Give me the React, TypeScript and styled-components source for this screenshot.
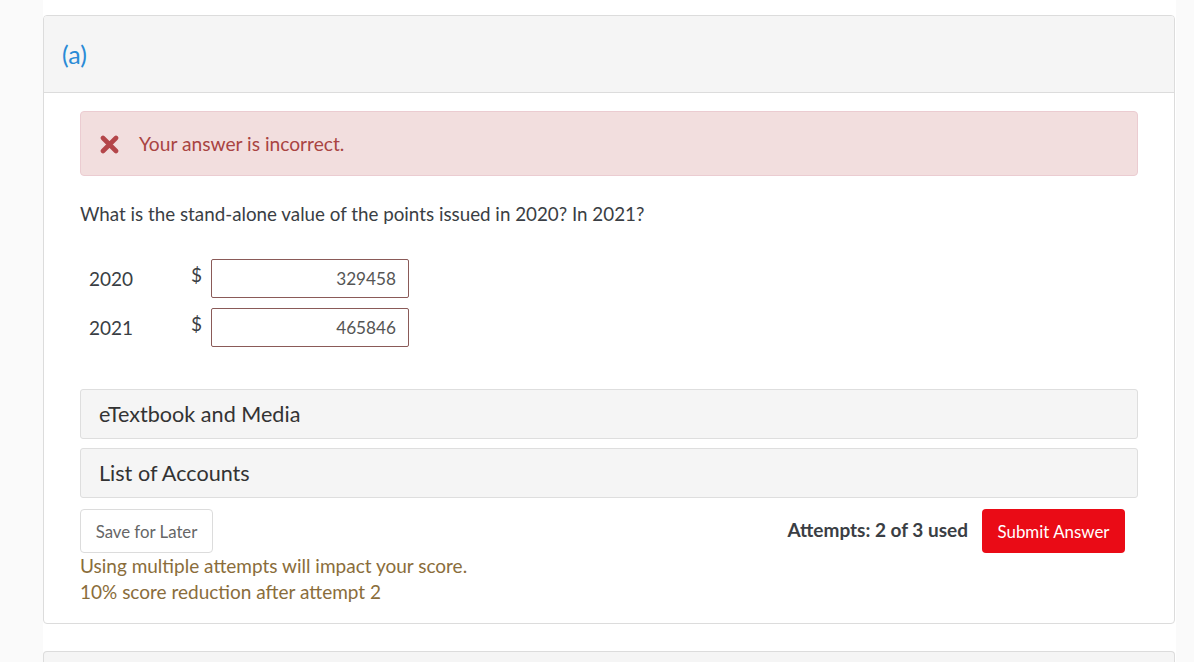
import React from "react";
import styled, { createGlobalStyle } from "styled-components";

const GlobalStyle = createGlobalStyle`
    body {
        margin: 0;
        background: #fafafa;
        font-family: Lato, "Open Sans", sans-serif;
    }
`;

const Page = styled.div`
    margin-left: 43px;
    width: 1133px;
    min-height: 662px;
    background: #fff;
    padding-top: 15px;
    box-sizing: border-box;
    overflow: hidden;
`;

const Card = styled.div`
    width: 1132px;
    box-sizing: border-box;
    border: 1px solid #dcdcdc;
    border-radius: 4px;
    margin-bottom: 27px;
    overflow: hidden;
`;

const CardHeader = styled.div`
    height: 77px;
    display: flex;
    align-items: center;
    padding-left: 18px;
    padding-bottom: 1px;
    box-sizing: border-box;
    background: #f5f5f5;
    border-bottom: 1px solid #dcdcdc;
    color: #2a8bd6;
    font-size: 25px;
`;

const CardBody = styled.div`
    padding: 18px 36px 18px 36px;
`;

const Alert = styled.div`
    height: 65px;
    box-sizing: border-box;
    display: flex;
    align-items: center;
    gap: 20px;
    padding-left: 19px;
    background: #f2dede;
    border: 1px solid #ebccd1;
    border-radius: 4px;
    color: #a94442;
    font-size: 19.2px;

    svg {
        flex: none;
        margin-top: 2px;
    }
`;

const Question = styled.p`
    margin: 25px 0 32px 0;
    font-size: 18.8px;
    line-height: 26px;
    color: #3a3e44;
`;

const AnswerRows = styled.div`
    display: flex;
    flex-direction: column;
    gap: 10px;
    margin-bottom: 42px;
`;

const AnswerRow = styled.div`
    display: flex;
    align-items: center;
`;

const RowLabel = styled.span`
    width: 102px;
    padding-left: 9px;
    font-size: 19px;
    color: #3a3e44;
`;

const Dollar = styled.span`
    width: 20px;
    font-size: 19px;
    color: #3a3e44;
    align-self: flex-start;
    margin-top: 4px;
`;

const AnswerInput = styled.div`
    width: 198px;
    height: 39px;
    box-sizing: border-box;
    border: 1px solid #8a5a58;
    border-radius: 2px;
    display: flex;
    align-items: center;
    justify-content: flex-end;
    padding-right: 12px;
    font-size: 17.2px;
    color: #555;
`;

const Panel = styled.div`
    height: 50px;
    box-sizing: border-box;
    display: flex;
    align-items: center;
    padding-left: 18px;
    background: #f5f5f5;
    border: 1px solid #dedede;
    border-radius: 3px;
    font-size: 21.6px;
    color: #333;
    margin-bottom: 9px;
`;

const Footer = styled.div`
    display: flex;
    align-items: center;
    justify-content: space-between;
    margin-top: 11px;
`;

const SaveButton = styled.button`
    height: 44px;
    width: 133px;
    background: #fff;
    border: 1px solid #dcdcdc;
    border-radius: 4px;
    font-family: inherit;
    font-size: 16.8px;
    color: #666;
    cursor: pointer;
`;

const Attempts = styled.div`
    display: flex;
    align-items: center;
    gap: 14px;
    margin-right: 13px;
`;

const AttemptsText = styled.span`
    font-size: 19px;
    font-weight: 700;
    color: #3a3e44;
    margin-top: -4px;
`;

const SubmitButton = styled.button`
    height: 44px;
    width: 143px;
    background: #ea0b16;
    border: none;
    border-radius: 4px;
    font-family: inherit;
    font-size: 16.9px;
    color: #fff;
    cursor: pointer;
`;

const Warning = styled.div`
    font-size: 19px;
    line-height: 26px;
    color: #8a6d3b;
`;

const NextCard = styled.div`
    width: 1132px;
    height: 40px;
    box-sizing: border-box;
    border: 1px solid #dcdcdc;
    border-bottom: none;
    border-radius: 4px 4px 0 0;
    background: #f5f5f5;
`;

const CrossIcon = () => (
    <svg width="19" height="19" viewBox="0 0 19 19">
        <path
            d="M3 3 L16 16 M16 3 L3 16"
            stroke="#b4464a"
            strokeWidth="4.6"
            strokeLinecap="round"
            fill="none"
        />
    </svg>
);

const answers = [
    { year: "2020", value: "329458" },
    { year: "2021", value: "465846" },
];

export default function App() {
    return (
        <>
            <GlobalStyle />
            <Page>
                <Card>
                    <CardHeader>(a)</CardHeader>
                    <CardBody>
                        <Alert>
                            <CrossIcon />
                            <span>Your answer is incorrect.</span>
                        </Alert>
                        <Question>What is the stand-alone value of the points issued in 2020? In 2021?</Question>
                        <AnswerRows>
                            {answers.map((a) => (
                                <AnswerRow key={a.year}>
                                    <RowLabel>{a.year}</RowLabel>
                                    <Dollar>$</Dollar>
                                    <AnswerInput>{a.value}</AnswerInput>
                                </AnswerRow>
                            ))}
                        </AnswerRows>
                        <Panel>eTextbook and Media</Panel>
                        <Panel>List of Accounts</Panel>
                        <Footer>
                            <SaveButton>Save for Later</SaveButton>
                            <Attempts>
                                <AttemptsText>Attempts: 2 of 3 used</AttemptsText>
                                <SubmitButton>Submit Answer</SubmitButton>
                            </Attempts>
                        </Footer>
                        <Warning>
                            Using multiple attempts will impact your score.
                            <br />
                            10% score reduction after attempt 2
                        </Warning>
                    </CardBody>
                </Card>
                <NextCard />
            </Page>
        </>
    );
}
